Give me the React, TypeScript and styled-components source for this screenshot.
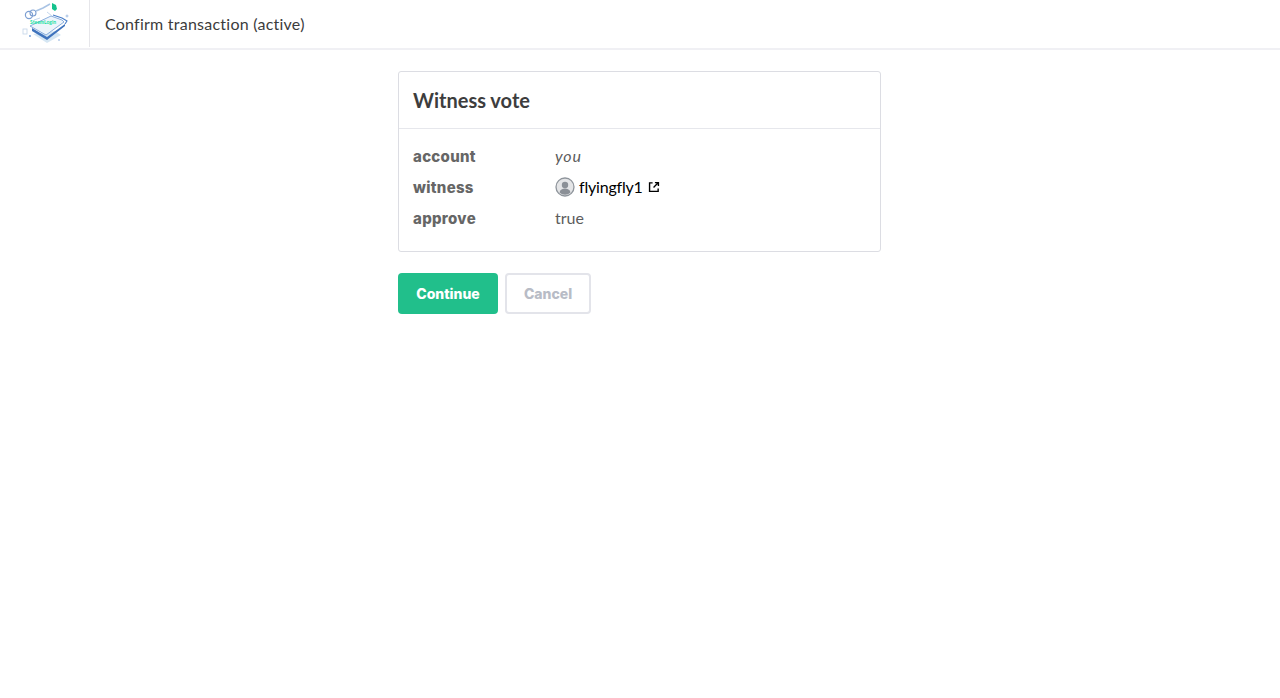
import React from "react";
import styled, { createGlobalStyle } from "styled-components";

const GlobalStyle = createGlobalStyle`
  html, body {
    margin: 0;
    padding: 0;
    background: #fff;
    font-family: "Lato", "Liberation Sans", sans-serif;
    color: #555;
  }
`;

const Header = styled.header`
  display: flex;
  align-items: stretch;
  height: 48px;
  border-bottom: 2px solid #f0f0f4;
`;

const LogoCell = styled.div`
  display: flex;
  align-items: center;
  justify-content: center;
  width: 89px;
  height: 47px;
  border-right: 1px solid #e6e6ea;
`;

const HeaderTitle = styled.h1`
  margin: 0 0 0 15px;
  font-size: 16px;
  font-weight: 400;
  line-height: 48px;
  color: #3c3c3c;
  letter-spacing: 0.24px;
`;

const Main = styled.main`
  width: 483px;
  margin: 21px auto 0 398px;
`;

const Card = styled.section`
  box-sizing: border-box;
  width: 483px;
  height: 181px;
  border: 1px solid #dcdde3;
  border-radius: 3px;
`;

const CardTitle = styled.h2`
  box-sizing: border-box;
  height: 57px;
  margin: 0;
  padding: 0 14px;
  font-size: 20px;
  font-weight: 700;
  line-height: 56px;
  color: #3d3d3d;
  border-bottom: 1px solid #e6e7ec;
`;

const Rows = styled.dl`
  display: grid;
  grid-template-columns: 142px 1fr;
  grid-auto-rows: 31px;
  margin: 0;
  padding: 12px 14px 0;
  font-size: 16px;
  line-height: 31px;
`;

const Label = styled.dt`
  font-family: "Inter", "Liberation Sans", sans-serif;
  font-size: 15px;
  font-weight: 800;
  color: #666;
  letter-spacing: 0.3px;
`;

const Value = styled.dd<{ $italic?: boolean }>`
  display: flex;
  align-items: center;
  margin: 0;
  padding-bottom: 2px;
  color: #5c5c5c;
  font-style: ${(p) => (p.$italic ? "italic" : "normal")};
  letter-spacing: ${(p) => (p.$italic ? "0.8px" : "0")};
`;

const AccountLink = styled.a`
  margin-left: 4px;
  margin-right: 5px;
  color: #000;
  text-decoration: none;
  letter-spacing: -0.2px;
`;

const Actions = styled.div`
  display: flex;
  gap: 7px;
  margin-top: 21px;
`;

const Button = styled.button<{ $primary?: boolean }>`
  box-sizing: border-box;
  height: 41px;
  width: ${(p) => (p.$primary ? "100px" : "86px")};
  padding: 0;
  border: ${(p) => (p.$primary ? "none" : "2px solid #e3e4ea")};
  border-radius: 4px;
  background: ${(p) => (p.$primary ? "#21bf8b" : "#fff")};
  color: ${(p) => (p.$primary ? "#fff" : "#b8bcc6")};
  font-family: "Inter", "Liberation Sans", sans-serif;
  font-size: 14px;
  font-weight: 800;
`;

const Logo = () => (
  <svg width="50" height="44" viewBox="0 0 50 44">
    <path d="M13 32l14 9 14-8-6-4z" fill="#d5e6f3" />
    <path d="M10 24l21-10 11 4 2 2-18 13z" fill="#eef5fb" stroke="#6f9bd6" strokeWidth="0.8" />
    <path d="M12 26l15 9 18-13v2L27 38l-15-9z" fill="#3f73bd" />
    <path d="M33 13l9 3 5 3-2 3" fill="none" stroke="#4a7fc9" strokeWidth="1.1" />
    <circle cx="9" cy="13" r="3.600" fill="none" stroke="#7d9fd2" strokeWidth="1.200" />
    <circle cx="13" cy="11" r="3" fill="none" stroke="#7d9fd2" strokeWidth="1.100" />
    <path d="M16 9l7-3 7-4" fill="none" stroke="#a9c3e4" strokeWidth="1.500" />
    <path d="M27 10l5 4M14 18l6-2" fill="none" stroke="#c6d8ee" strokeWidth="1" />
    <path d="M32 1l4 2 1 4-2 2-3-2z" fill="#14c28d" />
    <text x="10" y="22" fontSize="5" fill="#16e0a0" fontFamily="Lato, sans-serif" fontWeight="700">
      SteemLogin
    </text>
    <rect x="3" y="27" width="4" height="5" fill="none" stroke="#c4d5e8" strokeWidth="0.8" />
    <circle cx="10" cy="34" r="1" fill="#7ea4d8" />
    <circle cx="47" cy="14" r="1" fill="none" stroke="#8aaedb" strokeWidth="0.7" />
    <circle cx="39" cy="38" r="0.8" fill="#7ea4d8" />
  </svg>
);

const Avatar = () => (
  <svg width="20" height="20" viewBox="0 0 20 20">
    <circle cx="10" cy="10" r="9" fill="#e4e5e7" stroke="#8f959c" strokeWidth="1.3" />
    <circle cx="10" cy="8" r="3.2" fill="#8b9097" />
    <path d="M4.5 15.5c.6-3 3-4 5.5-4s4.900 1 5.500 4a8 8 0 0 1-11 0z" fill="#8b9097" />
  </svg>
);

const ExternalIcon = () => (
  <svg width="12" height="12" viewBox="0 0 13 13" fill="none" stroke="#000" strokeWidth="1.5">
    <path d="M5 2H1.700v9.300H11V8" />
    <path d="M7.500 1.700h3.800v3.800M11 2L6 7" />
  </svg>
);

export default function App() {
  return (
    <>
      <GlobalStyle />
      <Header>
        <LogoCell>
          <Logo />
        </LogoCell>
        <HeaderTitle>Confirm transaction (active)</HeaderTitle>
      </Header>
      <Main>
        <Card>
          <CardTitle>Witness vote</CardTitle>
          <Rows>
            <Label>account</Label>
            <Value $italic>you</Value>
            <Label>witness</Label>
            <Value>
              <Avatar />
              <AccountLink href="#">flyingfly1</AccountLink>
              <ExternalIcon />
            </Value>
            <Label>approve</Label>
            <Value>true</Value>
          </Rows>
        </Card>
        <Actions>
          <Button $primary>Continue</Button>
          <Button>Cancel</Button>
        </Actions>
      </Main>
    </>
  );
}
